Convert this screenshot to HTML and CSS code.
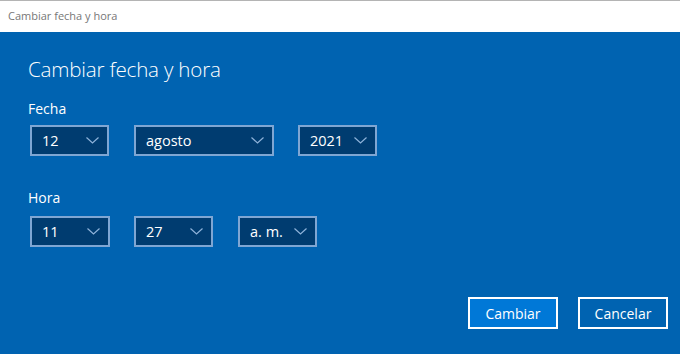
FILE: index.html
```html
<!DOCTYPE html>
<html lang="es">
<head>
<meta charset="utf-8">
<title>Cambiar fecha y hora</title>
<link rel="stylesheet" href="styles.css">
</head>
<body>
<div class="titlebar">Cambiar fecha y hora</div>
<div class="main">
  <h1 class="heading">Cambiar fecha y hora</h1>
  <div class="label label-fecha">Fecha</div>
  <div class="row row-fecha">
    <div class="dd w79"><span>12</span><svg class="chev" width="13" height="7" viewBox="0 0 13 7"><polyline points="0.5,0.5 6.5,6 12.5,0.5"/></svg></div>
    <div class="dd w140 gap25"><span>agosto</span><svg class="chev" width="13" height="7" viewBox="0 0 13 7"><polyline points="0.5,0.5 6.5,6 12.5,0.5"/></svg></div>
    <div class="dd w79 gap24"><span>2021</span><svg class="chev" width="13" height="7" viewBox="0 0 13 7"><polyline points="0.5,0.5 6.5,6 12.5,0.5"/></svg></div>
  </div>
  <div class="label label-hora">Hora</div>
  <div class="row row-hora">
    <div class="dd w80"><span>11</span><svg class="chev" width="13" height="7" viewBox="0 0 13 7"><polyline points="0.5,0.5 6.5,6 12.5,0.5"/></svg></div>
    <div class="dd w79 gap24"><span>27</span><svg class="chev" width="13" height="7" viewBox="0 0 13 7"><polyline points="0.5,0.5 6.5,6 12.5,0.5"/></svg></div>
    <div class="dd w79 gap25"><span>a. m.</span><svg class="chev" width="13" height="7" viewBox="0 0 13 7"><polyline points="0.5,0.5 6.5,6 12.5,0.5"/></svg></div>
  </div>
  <div class="actions">
    <button class="btn btn-primary">Cambiar</button>
    <button class="btn">Cancelar</button>
  </div>
</div>
</body>
</html>
```
FILE: styles.css
```css
* { box-sizing: border-box; }
html, body {
  margin: 0;
  padding: 0;
  width: 680px;
  height: 354px;
  overflow: hidden;
  font-family: "Open Sans", "Noto Sans", sans-serif;
}
.titlebar {
  height: 32px;
  border-top: 1px solid #b4b4b4;
  background: #ffffff;
  color: #777777;
  font-size: 11px;
  line-height: 30px;
  padding-left: 8px;
}
.main {
  background: #0063b1;
  height: 322px;
  padding: 0 12px 0 28px;
  display: flex;
  flex-direction: column;
  color: #ffffff;
}
.heading {
  margin: 22px 0 0;
  font-weight: 300;
  font-size: 20.6px;
  line-height: 30px;
  letter-spacing: -0.2px;
}
.label {
  font-size: 14px;
  line-height: 18px;
}
.label-fecha { margin-top: 16px; }
.label-hora { margin-top: 33px; }
.row {
  display: flex;
  margin-left: 2px;
}
.row-fecha { margin-top: 7px; }
.row-hora { margin-top: 9px; }
.gap24 { margin-left: 24px; }
.gap25 { margin-left: 25px; }
.dd {
  height: 31px;
  border: 2px solid #7fa6d3;
  background: #003c70;
  display: flex;
  align-items: center;
  justify-content: space-between;
  padding: 0 8px 0 10px;
  font-size: 14.5px;
}
.w79 { width: 79px; }
.w80 { width: 80px; }
.w140 { width: 140px; }
.chev polyline {
  fill: none;
  stroke: #8fb3da;
  stroke-width: 1.2;
}
.actions {
  margin-top: auto;
  margin-bottom: 25px;
  display: flex;
  justify-content: flex-end;
  gap: 20px;
}
.btn {
  width: 90px;
  height: 32px;
  border: 2px solid #ffffff;
  background: #0063b1;
  color: #ffffff;
  font-family: "Open Sans", "Noto Sans", sans-serif;
  font-size: 14px;
  padding: 0;
}
.btn-primary { background: #0078d7; }
```
